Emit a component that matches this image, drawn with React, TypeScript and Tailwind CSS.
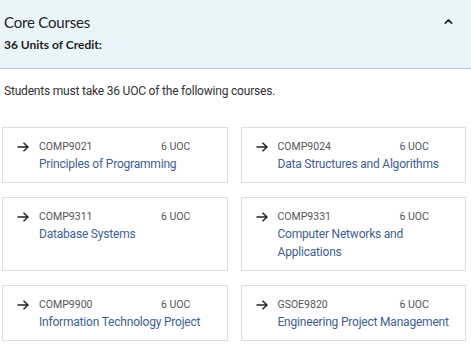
import { ChevronUp } from "lucide-react";

type Course = { code: string; uoc: number; title: string };

const courses: Course[] = [
  { code: "COMP9021", uoc: 6, title: "Principles of Programming" },
  { code: "COMP9024", uoc: 6, title: "Data Structures and Algorithms" },
  { code: "COMP9311", uoc: 6, title: "Database Systems" },
  { code: "COMP9331", uoc: 6, title: "Computer Networks and Applications" },
  { code: "COMP9900", uoc: 6, title: "Information Technology Project" },
  { code: "GSOE9820", uoc: 6, title: "Engineering Project Management" },
];

const Arrow = () => (
  <svg viewBox="0 0 12 10" className="mt-[3px] h-[10px] w-[12px] shrink-0" fill="none" stroke="#222" strokeWidth={1.5}>
    <path d="M0.5 5 H11 M6.5 0.8 L11 5 L6.5 9.2" />
  </svg>
);

const CourseCard = ({ course }: { course: Course }) => (
  <div className="flex items-start border border-[#dedede] bg-white pl-[14px] pr-2 pt-[11px] pb-[9px]">
    <Arrow />
    <div className="ml-[10px] flex flex-col">
      <div className="flex text-[10.5px] leading-[16px] text-[#555]">
        <span className="w-[122px]">{course.code}</span>
        <span>{course.uoc} UOC</span>
      </div>
      <span className="text-[12px] leading-[18px] tracking-[-0.2px] text-[#41608f]">{course.title}</span>
    </div>
  </div>
);

export default function App() {
  return (
    <main className="h-[348px] w-[471px] overflow-hidden bg-white font-['Roboto',sans-serif]">
      <header className="flex h-[69px] justify-between border-b border-[#adc9e8] bg-[#eaf5fb] pl-[4px] pr-[16px] font-['Lato',sans-serif]">
        <div className="flex flex-col pt-[12px]">
          <span className="text-[15px] leading-[20px] tracking-[-0.2px] text-[#222]">Core Courses</span>
          <span className="mt-[3px] text-[12px] font-bold leading-[20px] text-[#222]">36 Units of Credit:</span>
        </div>
        <ChevronUp className="mt-[15px] h-[13px] w-[13px] text-[#222]" strokeWidth={2.8} />
      </header>

      <p className="px-[4px] pt-[13px] text-[12px] leading-[18px] tracking-[-0.2px] text-[#333]">
        Students must take 36 UOC of the following courses.
      </p>

      <section className="mt-[27px] grid grid-cols-2 gap-x-[13px] gap-y-[14px] pl-[2px] pr-[5px]">
        {courses.map((c) => (
          <CourseCard key={c.code} course={c} />
        ))}
      </section>
    </main>
  );
}
